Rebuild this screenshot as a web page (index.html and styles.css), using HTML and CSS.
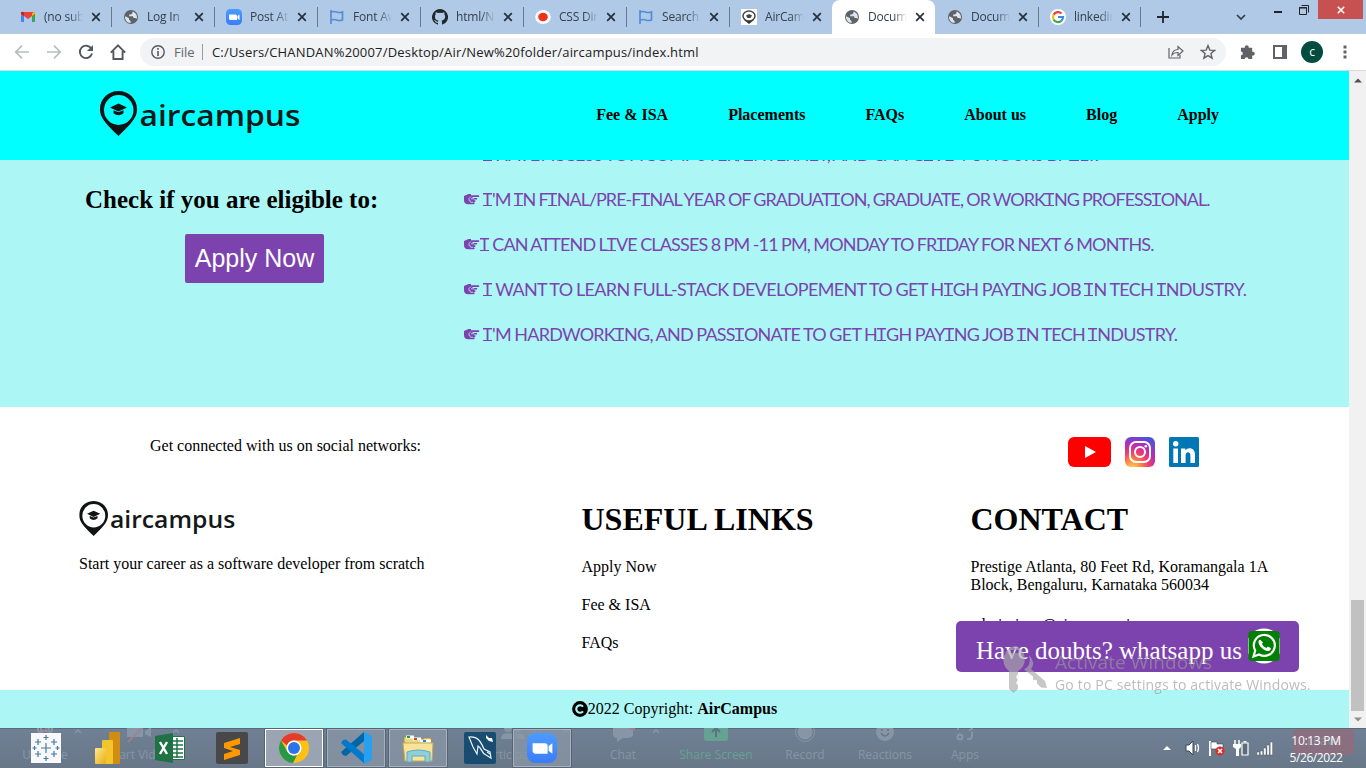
FILE: index.html
```html
<!DOCTYPE html>
<html lang="en">
<head>
<meta charset="utf-8">
<title>Document</title>
<link rel="stylesheet" href="styles.css">
</head>
<body>
<svg class="defs" aria-hidden="true">
  <symbol id="globe" viewBox="0 0 16 16"><circle cx="8" cy="8" r="7" fill="#5f6368"/><path d="M2.4 7.2 6 9.300v1.500l1.600 1.100v2.100C4.500 13.900 2 11.300 2 8zM9.500 2.500v1.400L8 5.400H6.200v1.900h3.700l.8 1.800h1.600l1.500.6c.7-3.200-1-6.100-4.300-7.200z" fill="#dce5f0"/></symbol>
  <symbol id="x" viewBox="0 0 10 10"><path d="m1.200 1.200 7.600 7.600m0-7.600L1.200 8.800" stroke="#25303b" stroke-width="1.700"/></symbol>
  <symbol id="zoomcam" viewBox="0 0 32 32"><defs><linearGradient id="zg" x2="0" y2="1"><stop stop-color="#4c9bff"/><stop offset="1" stop-color="#3b7cf8"/></linearGradient></defs><rect width="32" height="32" rx="9" fill="url(#zg)"/><path d="M6 11h13q3 0 3 3v8H9q-3 0-3-3zM23 14l4-3v11l-4-3z" fill="#fff"/></symbol>
  <symbol id="flag" viewBox="0 0 16 16"><path d="M2 1v14M2.500 3c4-2 6 2 11 0v8c-5 2-7-2-11 0" fill="none" stroke="#538dd7" stroke-width="1.700"/></symbol>
  <symbol id="pin" viewBox="0 0 37 45"><path fill-rule="evenodd" d="M18.500 0C8 0 0 8 0 18c0 8 4 13 18.500 27C33 31 37 26 37 18 37 8 29 0 18.500 0m0 4a14.500 14.500 0 0 1 0 30 14.500 15 0 0 1 0-30" fill="#101414"/><path d="m18.500 12.500-8.500 4 8.500 4 8.500-4zM13.500 19.300v3q5 4 10 0v-3l-5 2z" fill="#101414"/></symbol>
  <symbol id="logo" viewBox="0 0 200 45"><use href="#pin" width="37" height="45"/><text x="39.500" y="35" textLength="161" lengthAdjust="spacingAndGlyphs" class="logo-text">aircampus</text></symbol>
  <symbol id="hand" viewBox="0 0 16 12"><path d="M0 2 4.500 0H7v1.200h7.800q1.200.9 0 1.800H9l-1 1h4.800q1 .8 0 1.600H10v.7h1.200q.8.800-.2 1.600H9.600v.7h.8q.8.900-.4 1.700H4.800Q0 10.500 0 6z" fill="#7c43af"/><path d="M6.800 2.600 5 4.500v2l2 1M7 4.800h3M6.500 8.300H9" stroke="#acf7f5" stroke-width=".8" fill="none"/></symbol>
  <symbol id="caret" viewBox="0 0 8 5"><path d="m1 4 3-3 3 3" fill="none" stroke="currentColor" stroke-width="1.500"/></symbol>
</svg>

<header class="tabs">
  <div class="tab"><svg class="fav" viewBox="0 0 16 16"><path d="M1 3v10h3V7l4 3 4-3v6h3V3z" fill="#ea4335"/><path d="M1 5v8h3V7z" fill="#4285f4"/><path d="M12 7v6h3V5z" fill="#34a853"/><path d="M12 4.500V7l3-2.300V3.500q-1.500-1.500-3 1" fill="#fbbc04"/><path d="M1 3.500V5l3 2V4Q2.500 2 1 3.500" fill="#c5221f"/></svg><span class="title">(no subject)</span><svg class="close"><use href="#x"/></svg></div>
  <div class="tab"><svg class="fav"><use href="#globe"/></svg><span class="title">Log In</span><svg class="close"><use href="#x"/></svg></div>
  <div class="tab"><svg class="fav"><use href="#zoomcam"/></svg><span class="title">Post Attendee</span><svg class="close"><use href="#x"/></svg></div>
  <div class="tab"><svg class="fav"><use href="#flag"/></svg><span class="title">Font Awesome</span><svg class="close"><use href="#x"/></svg></div>
  <div class="tab"><svg class="fav" viewBox="0 0 16 16"><path d="M8 0a8 8 0 0 0-2.530 15.590c.4.070.55-.17.55-.38V13.700c-2.200.5-2.700-1-2.700-1-.4-.9-.9-1.200-.9-1.200-.7-.5.100-.5.100-.5.800.1 1.200.8 1.200.8.700 1.200 1.900.9 2.300.7.100-.5.300-.9.500-1.100-1.800-.2-3.600-.9-3.600-4 0-.9.300-1.600.8-2.100-.1-.2-.4-1 .1-2.100 0 0 .7-.2 2.200.8a7.500 7.500 0 0 1 4 0c1.500-1 2.200-.8 2.200-.8.4 1.100.2 1.900.1 2.100.5.600.8 1.300.8 2.100 0 3.100-1.900 3.800-3.700 4 .3.300.6.800.6 1.500v2.300c0 .2.100.5.500.4A8 8 0 0 0 8 0" fill="#20262c"/></svg><span class="title">html/NEW</span><svg class="close"><use href="#x"/></svg></div>
  <div class="tab"><svg class="fav" viewBox="0 0 16 16"><ellipse cx="8" cy="8" rx="7.800" ry="7" fill="#fff"/><ellipse cx="8" cy="8" rx="4.800" ry="4.200" fill="#ef3218"/></svg><span class="title">CSS Diner</span><svg class="close"><use href="#x"/></svg></div>
  <div class="tab"><svg class="fav"><use href="#flag"/></svg><span class="title">Search</span><svg class="close"><use href="#x"/></svg></div>
  <div class="tab"><svg class="fav" viewBox="0 0 16 16"><path d="M0 0h16v16H0z" fill="#fff"/><path d="m8 15-5-4h10z" fill="#333"/><ellipse cx="8" cy="7" rx="6" ry="5" fill="#fff" stroke="#444" stroke-width="1.500"/><path d="m5 6.500 3-1.500 3 1.500L9.500 9h-3z" fill="#444"/></svg><span class="title">AirCampus</span><svg class="close"><use href="#x"/></svg></div>
  <div class="tab active"><svg class="fav"><use href="#globe"/></svg><span class="title">Document</span><svg class="close"><use href="#x"/></svg></div>
  <div class="tab"><svg class="fav"><use href="#globe"/></svg><span class="title">Document</span><svg class="close"><use href="#x"/></svg></div>
  <div class="tab"><svg class="fav" viewBox="0 0 16 16"><circle cx="8" cy="8" r="8" fill="#fff"/><g fill="none" stroke-width="2.200"><path d="M11.500 4.500A5 5 0 0 0 3.600 5.700" stroke="#ea4335"/><path d="M3.600 5.700a5 5 0 0 0 0 4.700" stroke="#fbbc05"/><path d="M3.600 10.400a5 5 0 0 0 7.900 1.300" stroke="#34a853"/><path d="M11.500 11.700A5 5 0 0 0 13 8H8" stroke="#4285f4"/></g></svg><span class="title">linkedin</span><svg class="close"><use href="#x"/></svg></div>
  <svg class="plus" viewBox="0 0 12 12"><path d="M6 0v12M0 6h12" stroke="#20262c" stroke-width="1.800"/></svg>
  <svg class="chev" viewBox="0 0 10 6"><path d="m1 1 4 4 4-4" fill="none" stroke="#333d48" stroke-width="1.700"/></svg>
  <svg class="minimize" viewBox="0 0 8 2"><path d="M0 0h8v2H0z" fill="#222"/></svg>
  <svg class="restore" viewBox="0 0 10 10"><path d="M.5 3h7v6.500h-7zM0 2.600h8M2.500.5h7v7" fill="none" stroke="#222"/></svg>
  <div class="winclose"><svg viewBox="0 0 8 8"><path d="m.8.800 6.400 6.400m0-6.400L.8 7.200" stroke="#fff" stroke-width="1.600"/></svg></div>
</header>

<div class="toolbar">
  <svg class="tool" viewBox="0 0 16 16"><path d="M15 8H2m6-6.300L1.700 8 8 14.300" fill="none" stroke="#babcbe" stroke-width="1.700"/></svg>
  <svg class="tool" viewBox="0 0 16 16"><path d="M1 8h13M8 1.700 14.300 8 8 14.300" fill="none" stroke="#babcbe" stroke-width="1.700"/></svg>
  <svg class="tool" viewBox="0 0 16 16"><path d="M13.300 4.600A6.200 6.200 0 1 0 14 9.500" fill="none" stroke="#55595e" stroke-width="1.900"/><path d="M15 1v6H9z" fill="#55595e"/></svg>
  <svg class="tool" viewBox="0 0 16 16"><path d="M.8 8.700 8 1.400l7.200 7.300M3.400 7v8h9.200V7" fill="none" stroke="#55595e" stroke-width="1.900"/></svg>
  <div class="address">
    <svg class="info" viewBox="0 0 14 14"><circle cx="7" cy="7" r="6.200" fill="none" stroke="#55595e" stroke-width="1.400"/><path d="M7 6v5M7 3v1.700" stroke="#55595e" stroke-width="1.600"/></svg>
    <span class="scheme">File</span><span class="bar"></span><span class="url">C:/Users/CHANDAN%20007/Desktop/Air/New%20folder/aircampus/index.html</span>
    <svg class="share" viewBox="0 0 16 14"><path d="M1 3v10h11v-3M4 10c.5-4 2.500-5.500 6-5.500V1.500L15 6l-5 4.500v-3C7 7.300 5.500 8 4 10z" fill="none" stroke="#5f6368" stroke-width="1.200"/></svg>
    <svg class="star" viewBox="0 0 16 16"><path d="m8 1.600 1.800 4.500 4.800.3-3.700 3.100 1.200 4.700L8 11.600l-4.100 2.600 1.200-4.700-3.700-3.100 4.800-.3z" fill="none" stroke="#5f6368" stroke-width="1.400"/></svg>
  </div>
  <svg class="puzzle" viewBox="0 0 16 16"><path d="M1 3h4.200a2.100 2.100 0 1 1 4 0H13v4.200a2.100 2.100 0 1 1 0 4V15H9a2 2 0 0 0-4 0H1v-4a2 2 0 0 0 0-4z" fill="#5f6368"/></svg>
  <svg class="panel" viewBox="0 0 14 14"><path d="M1 1h12v12H1z" fill="none" stroke="#5f6368" stroke-width="2"/><path d="M9 1h4v12H9z" fill="#5f6368"/></svg>
  <span class="avatar">c</span>
  <svg class="dots" viewBox="0 0 4 14"><path d="M.5.500h3v3h-3zm0 5h3v3h-3zm0 5h3v3h-3z" fill="#5f6368"/></svg>
</div>

<main class="viewport">
  <div class="page">
    <nav class="nav">
      <svg class="brand"><use href="#logo"/></svg>
      <div class="menu"><a>Fee &amp; ISA</a><a>Placements</a><a>FAQs</a><a>About us</a><a>Blog</a><a>Apply</a></div>
    </nav>
    <section class="eligible">
      <div class="check"><h2>Check if you are eligible to:</h2><button class="apply">Apply Now</button></div>
      <ul class="criteria">
        <li class="c0"><svg><use href="#hand"/></svg><span>I HAVE ACCESS TO A COMPUTER/INTERNET, AND CAN GIVE 4-5 HOURS DAILY.</span></li>
        <li class="c1"><svg><use href="#hand"/></svg><span>I'M IN FINAL/PRE-FINAL YEAR OF GRADUATION, GRADUATE, OR WORKING PROFESSIONAL.</span></li>
        <li class="c2"><svg><use href="#hand"/></svg><span>I CAN ATTEND LIVE CLASSES 8 PM -11 PM, MONDAY TO FRIDAY FOR NEXT 6 MONTHS.</span></li>
        <li class="c3"><svg><use href="#hand"/></svg><span>I WANT TO LEARN FULL-STACK DEVELOPEMENT TO GET HIGH PAYING JOB IN TECH INDUSTRY.</span></li>
        <li class="c4"><svg><use href="#hand"/></svg><span>I'M HARDWORKING, AND PASSIONATE TO GET HIGH PAYING JOB IN TECH INDUSTRY.</span></li>
      </ul>
    </section>
    <footer class="footer">
      <div class="social">
        <span>Get connected with us on social networks:</span>
        <div class="networks">
          <svg class="yt" viewBox="0 0 43 30"><rect width="43" height="30" rx="6" fill="#fe0000"/><path d="m17 9 11 6-11 6z" fill="#fff"/></svg>
          <svg class="ig" viewBox="0 0 30 30"><defs><radialGradient id="ig" cx=".25" cy="1.050" r="1.100"><stop stop-color="#ffd45c"/><stop offset=".25" stop-color="#ff8b40"/><stop offset=".5" stop-color="#ee3c68"/><stop offset=".75" stop-color="#b52cb8"/><stop offset="1" stop-color="#5151d8"/></radialGradient></defs><rect width="30" height="30" rx="6" fill="url(#ig)"/><g fill="none" stroke="#fff" stroke-width="2"><rect x="5" y="5" width="20" height="20" rx="6"/><circle cx="15" cy="15" r="5"/></g><circle cx="20.800" cy="9.200" r="1.300" fill="#fff"/></svg>
          <svg class="ig" viewBox="0 0 30 30"><rect width="30" height="30" rx="1.500" fill="#0077b5"/><circle cx="6.700" cy="6.700" r="2.700" fill="#fff"/><path d="M4.300 11.500H9V26H4.300zM12 11.500h4.400v2c2.500-4 9.600-3 9.600 4V26h-4.600v-7.500c0-4.500-4.800-4-4.800 0V26H12z" fill="#fff"/></svg>
        </div>
      </div>
      <div class="columns">
        <div class="about"><svg><use href="#logo"/></svg><p>Start your career as a software developer from scratch</p></div>
        <div class="links"><h1>USEFUL LINKS</h1><p>Apply Now</p><p>Fee &amp; ISA</p><p>FAQs</p></div>
        <div class="contact"><h1>CONTACT</h1><p class="street">Prestige Atlanta, 80 Feet Rd, Koramangala 1A<br>Block, Bengaluru, Karnataka 560034</p><p>admissions@aircampus.in</p></div>
      </div>
    </footer>
    <div class="copyright"><svg viewBox="0 0 16 16"><circle cx="8" cy="8" r="7.900"/><path d="M11 5.600a3.800 3.800 0 1 0 0 4.800" fill="none" stroke="#acf7f5" stroke-width="2.100"/></svg><span>2022 Copyright: <b>AirCampus</b></span></div>
    <div class="whatsapp"><span>Have doubts? whatsapp us</span><svg viewBox="0 0 32 36"><circle cx="16" cy="18" r="17.500" fill="#fff"/><rect x=".5" y="3" width="31" height="30" rx="3" fill="#008000"/><path d="m5.500 28.500 1.700-6a10.500 10.500 0 1 1 4 4z" fill="none" stroke="#fff" stroke-width="2.200"/><path d="M12.500 12h-1.300c-3 3 3.500 11 9 11 2 0 3-1.500 2.500-3L19.800 18.500 18.500 20c-2-.7-3.700-2.300-4.500-4.300L15 14.500z" fill="#fff"/></svg></div>
  </div>
  <div class="scrollbar"><svg viewBox="0 0 8 5"><path d="m0 4.500 4-4 4 4z" fill="#505050"/></svg><span class="thumb"></span><svg viewBox="0 0 8 5"><path d="m0 .5 4 4 4-4z" fill="#909090"/></svg></div>
</main>

<div class="watermark">
  <svg viewBox="0 0 48 50"><path fill-rule="evenodd" d="M15 1A14 14 0 0 0 8 26v18l4.500 4L17 44v-4l-2-2 2-3-2-3 2-3v-3A14 14 0 0 0 15 1m-5 4h8v3h-8z"/><path d="m28 10q7 8 2 14l14 12 2 7-6-.5-4-4v-3l-4-1v-3l-9-7q8-4 5-14.500"/></svg>
  <div><p class="wm-title">Activate Windows</p><p class="wm-sub">Go to PC settings to activate Windows.</p></div>
</div>

<footer class="taskbar">
  <div class="ghosts">
    <div class="ghost g-mute"><svg viewBox="0 0 24 24"><path d="M8 0h8v12H8zM5 8v4q7 8 14 0V8M12 16v4" fill="none" stroke="currentColor" stroke-width="2"/><path d="M3 20 21 2" stroke="#a67d8d" stroke-width="1.500"/></svg><span>Unmute</span></div>
    <div class="ghost g-video"><svg viewBox="0 0 24 24"><path d="M0 7h16v11H0zM18 12l6-4v10l-6-3z" fill="currentColor"/><path d="M1 23 17 7" stroke="#a67d8d" stroke-width="1.500"/></svg><span>Start Video</span></div>
    <div class="ghost g-people"><svg viewBox="0 0 24 24"><circle cx="7" cy="9" r="4"/><circle cx="17" cy="9" r="4"/><path d="M0 20q0-6 7-6t7 6zM14 14q9-1 10 6h-8z"/></svg><span>Participants</span></div>
    <div class="ghost g-chat"><svg viewBox="0 0 24 24"><path d="M2 5h20v12q-2 2-6 2h-4l-6 4v-4Q2 19 2 15z"/><path d="M15 5h14v5q-4 3-11 0z" fill="#a67d8d"/></svg><span>Chat</span></div>
    <div class="ghost g-share"><svg viewBox="0 0 24 24"><rect width="24" height="22" rx="3"/><path d="M12 18V9m-4 4 4-4 4 4" fill="none" stroke="#5c737f" stroke-width="2"/></svg><span>Share Screen</span></div>
    <div class="ghost g-record"><svg viewBox="0 0 24 24"><circle cx="12" cy="13" r="7.500"/><circle cx="12" cy="13" r="9.500" fill="none" stroke="currentColor"/></svg><span>Record</span></div>
    <div class="ghost g-react"><svg viewBox="0 0 24 24"><circle cx="12" cy="13" r="9"/><path d="M8 14q4 6 8 0M9 10v2m6-2v2" fill="none" stroke="#64768a" stroke-width="1.500"/></svg><span>Reactions</span></div>
    <div class="ghost g-apps"><svg viewBox="0 0 24 24"><path d="M5 4v7m14-7v5q0 2-3 2M14 20h2q3 0 3-4v-3" fill="none" stroke="currentColor" stroke-width="2"/><circle cx="7" cy="18" r="2.500" fill="none" stroke="currentColor" stroke-width="2"/></svg><span>Apps</span></div>
    <svg class="gc gc1"><use href="#caret"/></svg><svg class="gc gc2"><use href="#caret"/></svg><svg class="gc gc3"><use href="#caret"/></svg><svg class="gc gc4"><use href="#caret"/></svg>
    <span class="leave">Leave</span><span class="count">32</span>
  </div>
  <div class="apps">
    <div class="app"><svg viewBox="0 0 32 32"><path d="M1 1h30v30H1z" fill="#f8f8f8"/><path d="M16 11v10m-5-5h10M16 3v5m-2.500-2.500h5M16 24v5m-2.500-2.500h5M8 7v6m-3-3h6M24 7v6m-3-3h6M8 19v6m-3-3h6M24 19v6m-3-3h6M4.500 14v4m-2-2h4M27.500 14v4m-2-2h4" stroke="#427ba7" stroke-width="1.200"/></svg></div>
    <div class="app"><svg viewBox="0 0 32 32"><defs><linearGradient id="pb" x2="1" y2="1"><stop stop-color="#ffe88e"/><stop offset="1" stop-color="#e8ae11"/></linearGradient></defs><rect x="17" width="11" height="32" rx="1" fill="#d18d12"/><rect x="10" y="8" width="11" height="24" rx="1" fill="#f2c52c"/><rect x="3" y="16" width="11" height="16" rx="1" fill="url(#pb)"/></svg></div>
    <div class="app"><svg viewBox="0 0 32 32"><path d="M17 4.500h13.500v23H17z" fill="#fff" stroke="#20744a"/><path d="M18 9h11M18 13h11M18 17h11M18 21h11M18 25h11M23 6v20" stroke="#20744a" stroke-width="1.500"/><path d="m1 4 18-3v30L1 28z" fill="#207245"/><path d="m6 10 7 12M13 10 6 22" stroke="#fff" stroke-width="2.400"/></svg></div>
    <div class="app"><svg viewBox="0 0 32 32"><rect width="32" height="32" rx="2" fill="#484848"/><path d="m8 11 16-5v6l-10 3 10 3v5L8 28v-6l9-3-9-3z" fill="#ff9800"/></svg></div>
    <div class="app open current"><svg viewBox="0 0 32 32"><circle cx="16" cy="16" r="15" fill="#fbc116"/><path d="M3 8.500A15 15 0 0 1 29 8.500H16a7.500 7.500 0 0 0-7 5z" fill="#e33b2e"/><path d="M3 8.500 9.500 20A7.500 7.500 0 0 0 19 23l-4 8A15 15 0 0 1 3 8.500" fill="#279847"/><circle cx="16" cy="16" r="7.500" fill="#fff"/><circle cx="16" cy="16" r="6" fill="#2874e8"/></svg></div>
    <div class="app open"><svg viewBox="0 0 32 32"><path d="M24 0 1 20l2 3 3 1 18-15z" fill="#0065a9"/><path d="M1 11 3 8l3-.5L25 23v9z" fill="#007acc"/><path d="m24 0 8 4v24l-8 4z" fill="#27a0ef"/></svg></div>
    <div class="app open"><svg viewBox="0 0 32 32"><path d="M2 5h10l1 3h8l1-2h7v22H2z" fill="#eed983" stroke="#a98d41"/><path d="M4 5h8M11 7h8M18 9h11" stroke="#fff" stroke-width="3"/><path d="M5 5h3" stroke="#12a63c" stroke-width="2"/><path d="M12 7h3" stroke="#d44325" stroke-width="2"/><path d="M21 9h3" stroke="#297ddd" stroke-width="2"/><path d="M1 11h30l-1 18H3z" fill="#f7e498" stroke="#c8a95b"/><path d="M5 20q11-4 23 0v10h-5v-6H10v6H5z" fill="#91ced9" stroke="#5eaac4"/></svg></div>
    <div class="app"><svg viewBox="0 0 32 32"><rect width="32" height="32" rx="2" fill="#184c70"/><path d="M5 5c9-1 12 5 15 12l6 3 1 6-5-3c-5-2-4-7-8-9l-1 8-4-7zM23 20l3 2" fill="none" stroke="#ecf4f8" stroke-width="1.200"/><path d="m22 3 3 3 3 0 1 4-4-1-3-3z" fill="#fff"/></svg></div>
    <div class="app open"><svg viewBox="-1 -1 34 34"><use href="#zoomcam" width="32" height="32"/></svg></div>
  </div>
  <div class="tray">
    <svg class="up" viewBox="0 0 8 5"><path d="m0 4 4-4 4 4z" fill="#fff"/></svg>
    <svg viewBox="0 0 16 16"><path d="M1 5h3l4-4v14l-4-4H1z" fill="#fff" stroke="#394654"/><path d="M10.500 5v6M12.500 4q2 4 0 8" fill="none" stroke="#fff" stroke-width="1.200"/></svg>
    <svg viewBox="0 0 16 16"><path d="M1 1v15" stroke="#fff" stroke-width="2"/><path d="M2 2h6v2h6v7H7V9H2z" fill="#fff" stroke="#394654" stroke-width=".6"/><circle cx="11" cy="11" r="4.600" fill="#d92d27"/><path d="m9 9 4 4m0-4-4 4" stroke="#fff" stroke-width="1.500"/></svg>
    <svg viewBox="0 0 16 16"><path d="M2 0v4m4-4v4" stroke="#fff" stroke-width="1.500"/><path d="M0 4h8v3L6 9v7H3V9L0 7z" fill="#fff"/><path d="M9 3h6v12H9z" fill="#5d6c7b" stroke="#fff" stroke-width="1.200"/><path d="M10.500 1h3v1.500h-3z" fill="#fff"/></svg>
    <svg viewBox="0 0 16 16"><path d="M0 12h2.400v3H0zm3.300-1h2.400v4H3.300zm3.300-3H9v7H6.600zm3.300-3h2.400v10H9.900zm3.300-3h2.400v13h-2.400z" fill="#fff" stroke="#394654" stroke-width=".4"/></svg>
    <div class="clock"><span class="time">10:13 PM</span><span class="date">5/26/2022</span></div>
  </div>
</footer>
<script src="criteria.js"></script>
</body>
</html>
```

FILE: criteria.js
```js
// Wraps each capital I in the criteria list so it can be drawn with crossbars.
document.querySelectorAll('.criteria span').forEach((line) => {
  line.innerHTML = line.textContent.replace(/I/g, '<i>I</i>');
});
```

FILE: styles.css
```css
* { box-sizing: border-box; }
body { margin: 0; width: 1366px; height: 768px; overflow: hidden; display: grid; grid-template-rows: 34px 37px 657px 40px; position: relative; background: #fff; font: 16px/18px "Liberation Serif", serif; color: #000; }
svg { display: block; flex: none; }
p, h1, h2, ul { margin: 0; padding: 0; }
.defs { position: absolute; width: 0; height: 0; }

.tabs { background: #afc9e7; display: flex; align-items: center; padding-left: 8px; font: 12px/16px "Open Sans", sans-serif; color: #35414d; }
.tab { width: 103px; height: 34px; display: flex; align-items: center; padding-left: 12px; background: linear-gradient(#68798c, #68798c) left 0 top 7px / 1px 20px no-repeat; flex: none; }
.tab:first-of-type, .active + .tab { background: none; }
.tab.active { background: #fff; border-radius: 8px 8px 0 0; }
.fav { width: 16px; height: 16px; }
.title { width: 39px; margin-left: 8px; overflow: hidden; white-space: nowrap; letter-spacing: -.2px; mask-image: linear-gradient(90deg, #000 65%, transparent); }
.close { width: 10px; height: 10px; margin-left: 8px; }
.plus { box-sizing: content-box; width: 12px; height: 12px; padding: 4px 0 4px 16px; border-left: 1px solid #68798c; margin-left: -1px; }
.chev { width: 10px; height: 6px; margin-left: 67px; }
.minimize { width: 8px; height: 2px; margin: -10px 0 0 28px; }
.restore { width: 10px; height: 10px; margin: -15px 0 0 17px; }
.winclose { width: 45px; height: 19px; margin-left: 9px; align-self: flex-start; background: #c75050; display: grid; place-items: center; }
.winclose svg { width: 8px; height: 8px; }

.toolbar { display: flex; align-items: center; padding-left: 14px; border-bottom: 1px solid #d8dadc; background: #fff; font-family: "Open Sans", sans-serif; }
.tool { width: 16px; height: 16px; margin-right: 16px; }
.address { width: 1086px; height: 28px; border-radius: 14px; margin-left: -2px; background: #f1f3f4; display: flex; align-items: center; padding-left: 11px; font-size: 13px; }
.info { width: 14px; height: 14px; }
.scheme { width: 28px; margin-left: 9px; color: #62676c; }
.bar { width: 1px; height: 16px; background: #999da1; }
.url { width: 490px; margin-left: 9px; color: #202124; white-space: nowrap; letter-spacing: .18px; }
.share { width: 16px; height: 14px; margin-left: 466px; }
.star { width: 16px; height: 16px; margin-left: 16px; }
.puzzle { width: 15px; height: 15px; margin-left: 14px; }
.panel { width: 14px; height: 14px; margin-left: 18px; }
.avatar { width: 22px; height: 22px; margin-left: 14px; border-radius: 50%; background: #004d40; color: #fff; font: 12px/21px "Open Sans", sans-serif; text-align: center; }
.dots { width: 4px; height: 14px; margin-left: 20px; }

.viewport { display: flex; }
.page { width: 1349px; height: 657px; position: relative; background: #fff; }
.nav { height: 89px; background: #00ffff; display: flex; align-items: center; justify-content: space-between; padding: 0 130px 0 100px; position: relative; z-index: 1; }
.brand { width: 200px; height: 45px; margin-top: -5px; }
.logo-text { font: 600 29.500px "Open Sans", sans-serif; fill: #141818; }
.menu { display: flex; gap: 60px; font-weight: bold; padding-bottom: 2px; }
.eligible { height: 247px; background: #acf7f5; display: flex; overflow: hidden; }
.check { width: 464px; padding: 25px 0 0 85px; }
h2 { font-size: 25px; line-height: 29px; white-space: nowrap; }
.apply { display: block; width: 139px; height: 49px; margin: 20px 0 0 100px; padding: 0; border: 0; border-radius: 2px; background: #7c43af; color: #fff; font: 25px "Liberation Sans", sans-serif; }
.criteria { margin-top: -28px; list-style: none; color: #7c43af; font: 18px/45px Lato, sans-serif; word-spacing: -.5px; white-space: nowrap; }
.criteria li { height: 45px; display: flex; align-items: center; gap: 3px; }
.criteria svg { width: 16px; height: 12px; }
.criteria i { display: inline-block; height: 13px; line-height: 13px; width: 9px; font-style: normal; letter-spacing: 0; text-align: center; background: linear-gradient(#7c43af, #7c43af) top / 100% 1.500px no-repeat, linear-gradient(#7c43af, #7c43af) bottom / 100% 1.500px no-repeat; }
.c0 { letter-spacing: -.86px; }
.c1 { letter-spacing: -.98px; }
.criteria .c2 { letter-spacing: -.84px; gap: 0; }
.c3 { letter-spacing: -.66px; }
.c4 { letter-spacing: -.75px; }

.footer { height: 283px; padding-top: 30px; overflow: hidden; }
.social { height: 30px; display: flex; justify-content: space-between; padding: 0 150px; }
.networks { display: flex; gap: 14px; }
.yt { width: 43px; height: 30px; }
.ig { width: 30px; height: 30px; }
.columns { display: flex; padding: 34px 0 0 79px; }
.about { width: 502.500px; }
.about svg { width: 156px; height: 35px; }
.about p { margin-top: 19px; }
.links { width: 389px; }
h1 { font-size: 32px; line-height: 37px; }
.links p, .contact p { margin-bottom: 20px; }
.contact .street { margin-bottom: 22px; }
.links h1, .contact h1 { margin-bottom: 20px; }
.copyright { height: 38px; background: #acf7f5; display: flex; align-items: center; justify-content: center; }
.copyright svg { width: 16px; height: 16px; }
.whatsapp { position: absolute; left: 956px; top: 550px; width: 343px; height: 51px; border-radius: 5px; background: #7c43af; color: #fff; font-size: 25px; line-height: 29px; padding: 7px 0 0 20px; display: flex; white-space: nowrap; }
.whatsapp span { margin-top: 8px; }
.whatsapp svg { width: 32px; height: 36px; margin-left: 6px; }
.scrollbar { width: 17px; background: #f1f1f1; display: flex; flex-direction: column; align-items: center; padding: 7px 0 6px; }
.scrollbar svg { width: 8px; height: 5px; }
.thumb { width: 13px; height: 111px; margin: auto 0 6px; background: #c1c1c1; }

.watermark { position: absolute; left: 1001px; top: 645px; display: flex; color: #999; opacity: .65; font-family: "Open Sans", sans-serif; white-space: nowrap; }
.watermark svg { width: 48px; height: 50px; fill: #aaa; }
.watermark div { margin-left: 6px; }
.wm-title { font-size: 19px; line-height: 34px; letter-spacing: .08px; }
.wm-sub { font-size: 14px; line-height: 12px; letter-spacing: .17px; }

.taskbar { position: relative; overflow: hidden; background: linear-gradient(#5c6979 0 1px, #708095 1px, #687788); display: flex; justify-content: space-between; font-family: "Open Sans", sans-serif; }
.ghosts { position: absolute; inset: 0; color: #8796a6; fill: #8796a6; font-size: 12px; line-height: 14px; }
.ghost { position: absolute; top: -9px; width: 100px; display: flex; flex-direction: column; align-items: center; gap: 5px; white-space: nowrap; }
.ghost svg { width: 24px; height: 24px; }
.g-mute { left: -5px; } .g-video { left: 89px; } .g-people { left: 463px; } .g-chat { left: 573px; }
.g-share { left: 666px; color: #65a294; fill: #65a294; } .g-record { left: 755px; } .g-react { left: 835px; } .g-apps { left: 915px; }
.gc { position: absolute; top: 1px; width: 8px; height: 5px; }
.gc1 { left: 74px; } .gc2 { left: 172px; } .gc3 { left: 562px; } .gc4 { left: 652px; }
.leave { position: absolute; left: 1293px; top: 1px; width: 61px; height: 26px; border-radius: 5px; background: #896f80; text-align: center; line-height: 24px; }
.count { position: absolute; left: 529px; top: -4px; }
.apps { display: flex; position: relative; padding-left: 17px; gap: 4px; }
.app { width: 58px; height: 40px; display: grid; place-items: center; }
.app svg { width: 32px; height: 32px; }
.app.open { background: #8a97a7bb; border: 1px solid #a8b2bd; box-shadow: 0 0 0 1px #576475; height: 38px; margin-top: 1px; }
.app.current { background: #a6aebacc; border-color: #fff; }
.tray { position: relative; display: flex; align-items: center; padding-right: 22px; }
.tray svg { width: 16px; height: 16px; margin-right: 8px; }
.tray .up { width: 8px; height: 5px; margin-right: 14px; }
.clock { width: 56px; margin-left: 7px; color: #fff; font-size: 12px; line-height: 17px; letter-spacing: -.3px; display: flex; flex-direction: column; align-items: center; padding-top: 2px; }
.date { letter-spacing: -.45px; }
```
